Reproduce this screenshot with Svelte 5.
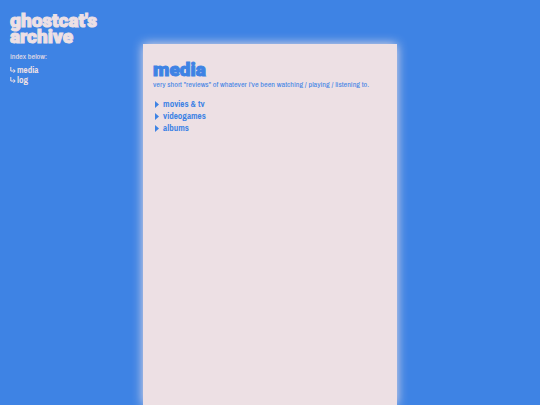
<script>
  const links = ['media', 'log']
  const categories = ['movies & tv', 'videogames', 'albums']
</script>

<div class="page">
  <header>
    <h1>ghostcat's archive</h1>
    <p>index below:</p>
    <nav>
      {#each links as link}
        <a href={`#${link}`}>
          <svg viewBox="0 0 6 8" aria-hidden="true">
            <path d="M0.8 1V5H5M3.5 3.2L5.2 5L3.5 6.8" />
          </svg>
          {link}
        </a>
      {/each}
    </nav>
  </header>

  <main id="media">
    <h2>media</h2>
    <p>very short "reviews" of whatever i've been watching / playing / listening to.</p>
    <div class="categories">
      {#each categories as category}
        <details>
          <summary>
            <svg viewBox="0 0 4 7" aria-hidden="true">
              <path d="M0 0L4 3.5L0 7Z" />
            </svg>
            {category}
          </summary>
        </details>
      {/each}
    </div>
  </main>
</div>

<style>
  :global(body) {
    background: #3e83e4;
  }

  .page {
    display: grid;
    grid-template-columns: 1fr 47% 1fr;
    min-height: 100vh;
    font-family: 'Archivo Narrow', 'Roboto Condensed', Roboto, sans-serif;
    font-size: 8px;
    line-height: 10px;
  }

  h1,
  h2,
  p {
    margin: 0;
  }

  h1,
  h2 {
    font-family: Roboto, sans-serif;
    font-size: 19px;
    font-weight: 900;
    line-height: 16px;
    -webkit-text-stroke: 1px;
  }

  header {
    padding: 13px 10px;
    color: #ede0e4;
  }

  header p {
    margin: 6px 0 4px;
  }

  nav {
    display: flex;
    flex-direction: column;
    align-items: flex-start;
  }

  nav a {
    display: flex;
    align-items: center;
    gap: 1px;
    color: inherit;
    font-size: 9px;
    font-weight: bold;
    text-decoration: none;
  }

  nav svg {
    width: 6px;
    height: 8px;
    fill: none;
    stroke: currentColor;
  }

  main {
    margin-top: 44px;
    padding: 18px 10px;
    background: #ede0e4;
    box-shadow: 0 0 10px #ede0e4;
    color: #3e83e4;
  }

  main p {
    margin-top: 1px;
  }

  .categories {
    margin-top: 9px;
  }

  summary {
    display: flex;
    align-items: center;
    gap: 4px;
    padding-left: 2px;
    font-size: 9px;
    font-weight: bold;
    line-height: 12px;
    cursor: pointer;
  }

  summary svg {
    width: 4px;
    height: 7px;
    fill: currentColor;
  }

  details[open] summary svg {
    transform: rotate(90deg);
  }
</style>
